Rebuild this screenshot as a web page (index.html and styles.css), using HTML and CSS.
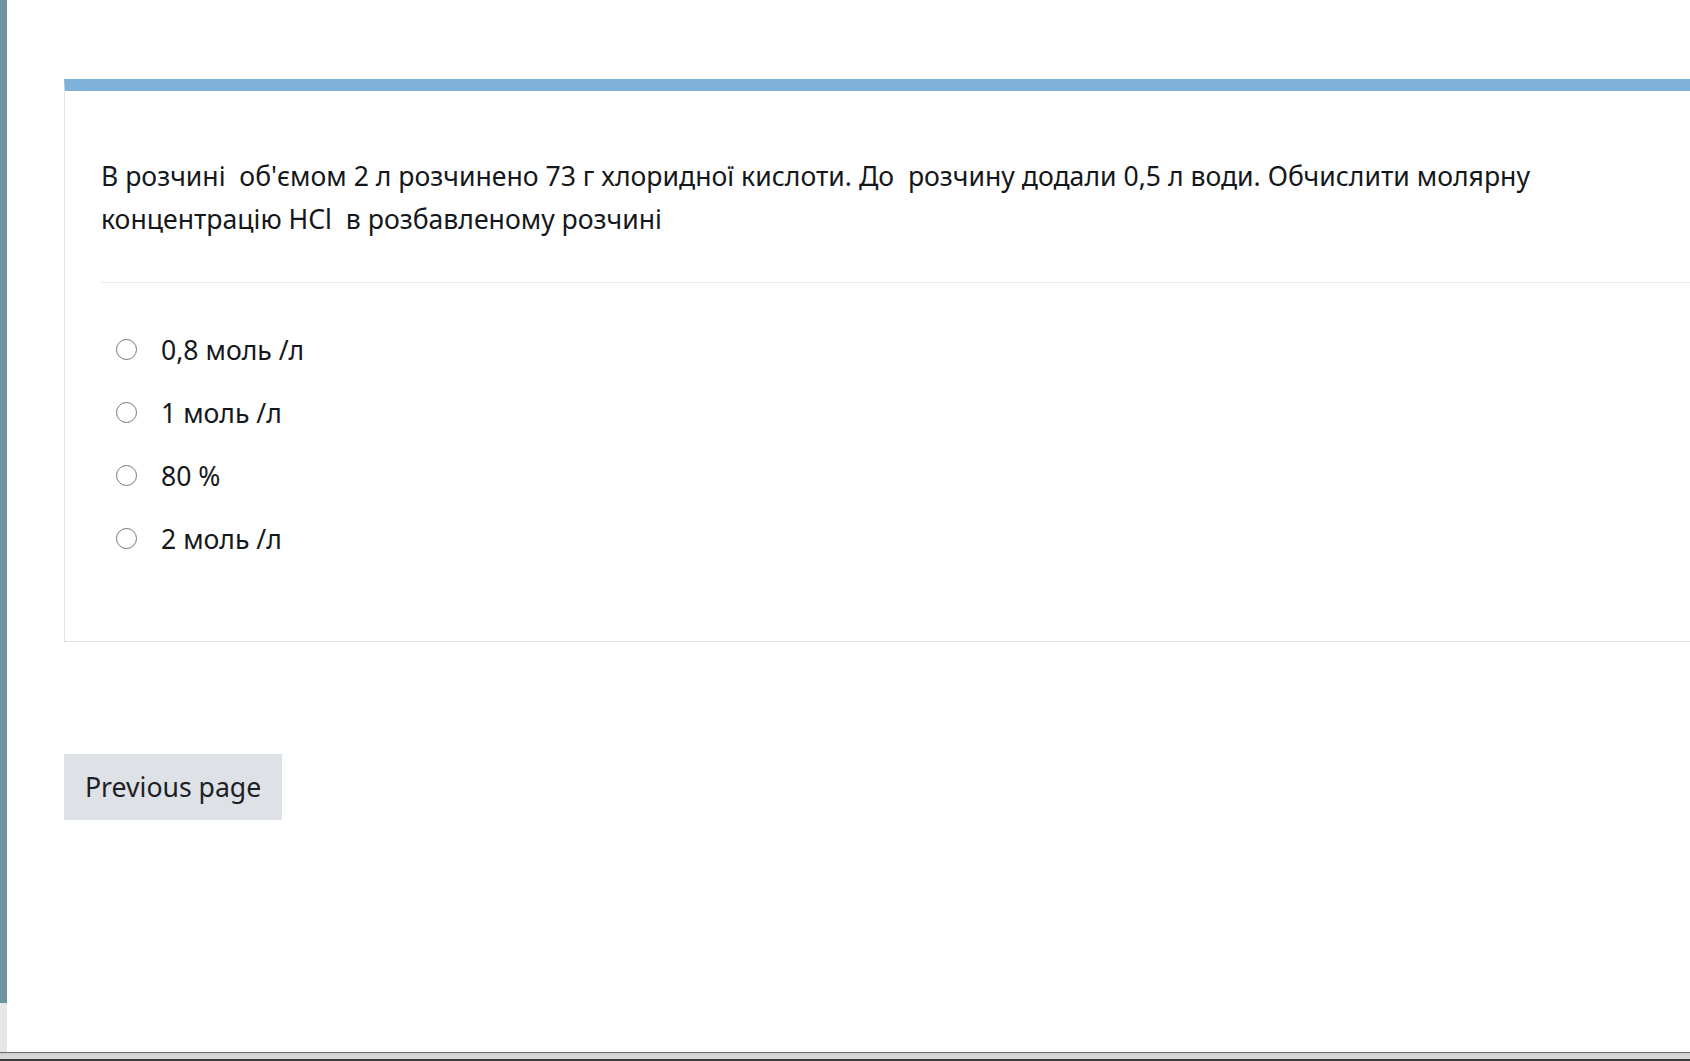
FILE: index.html
```html
<!DOCTYPE html>
<html lang="uk">
<head>
    <meta charset="UTF-8">
    <meta name="viewport" content="width=device-width, initial-scale=1.0">
    <title>Тест</title>
    <link rel="stylesheet" href="styles.css">
</head>
<body>
  <div class="window">
    <div class="side-strip"></div>

    <main class="page">
      <div class="que-card">
        <div class="qtext">
          <p>В розчині&nbsp; об'ємом 2 л розчинено 73 г хлоридної кислоти. До&nbsp; розчину додали 0,5 л води. Обчислити молярну концентрацію HCl&nbsp; в розбавленому розчині</p>
        </div>

        <ul class="answers">
          <li><span class="radio"></span>0,8 моль /л</li>
          <li><span class="radio"></span>1 моль /л</li>
          <li><span class="radio"></span>80 %</li>
          <li><span class="radio"></span>2 моль /л</li>
        </ul>
      </div>

      <a class="prev-button" href="#">Previous page</a>
    </main>
  </div>
  <div class="taskbar"></div>
</body>
</html>
```

FILE: styles.css
```css
html, body {
    margin: 0;
    padding: 0;
    height: 1061px;
    overflow: hidden;
}

body {
    font-family: "Noto Sans", "Open Sans", sans-serif;
    background-color: #e4e4e4;
    color: #1d2125;
}

.window {
    display: flex;
    height: 1052px;
    border-bottom: 1px solid #6a6a6a;
}

.side-strip {
    width: 7px;
    flex-shrink: 0;
    background: linear-gradient(#6d93a2 0, #6d93a2 1003px, #e6e6e6 1003px);
}

.page {
    flex: 1;
    background-color: white;
    padding: 79px 0 0 57px;
    overflow: hidden;
}

/* question box runs off the right edge */
.que-card {
    width: 1700px;
    border: 1px solid #e2e2e2;
    border-top: 12px solid #7fb2da;
    padding: 64px 0 71px 36px;
}

.qtext {
    padding-bottom: 41px;
    border-bottom: 1px solid #ebebeb;
}

.qtext p {
    width: 1460px;
    margin: 0;
    font-size: 26.6px;
    line-height: 43px;
    color: #15181b;
}

.answers {
    list-style-type: none;
    margin: 0;
    padding: 35px 0 0 15px;
}

.answers li {
    display: flex;
    align-items: center;
    font-size: 26.6px;
    height: 63px;
    color: #15181b;
}

.radio {
    width: 19px;
    height: 19px;
    border: 1.6px solid #767676;
    border-radius: 50%;
    margin-right: 24px;
    box-sizing: content-box;
}

.prev-button {
    display: block;
    width: fit-content;
    margin-top: 112px;
    background-color: #dee2e6;
    color: #1d2125;
    text-decoration: none;
    font-size: 26.6px;
    line-height: 66px;
    padding: 0 21px;
}

.taskbar {
    height: 8px;
    background: linear-gradient(#cfcfcf, #dadada 70%, #3a3a3a 70%);
}
```
